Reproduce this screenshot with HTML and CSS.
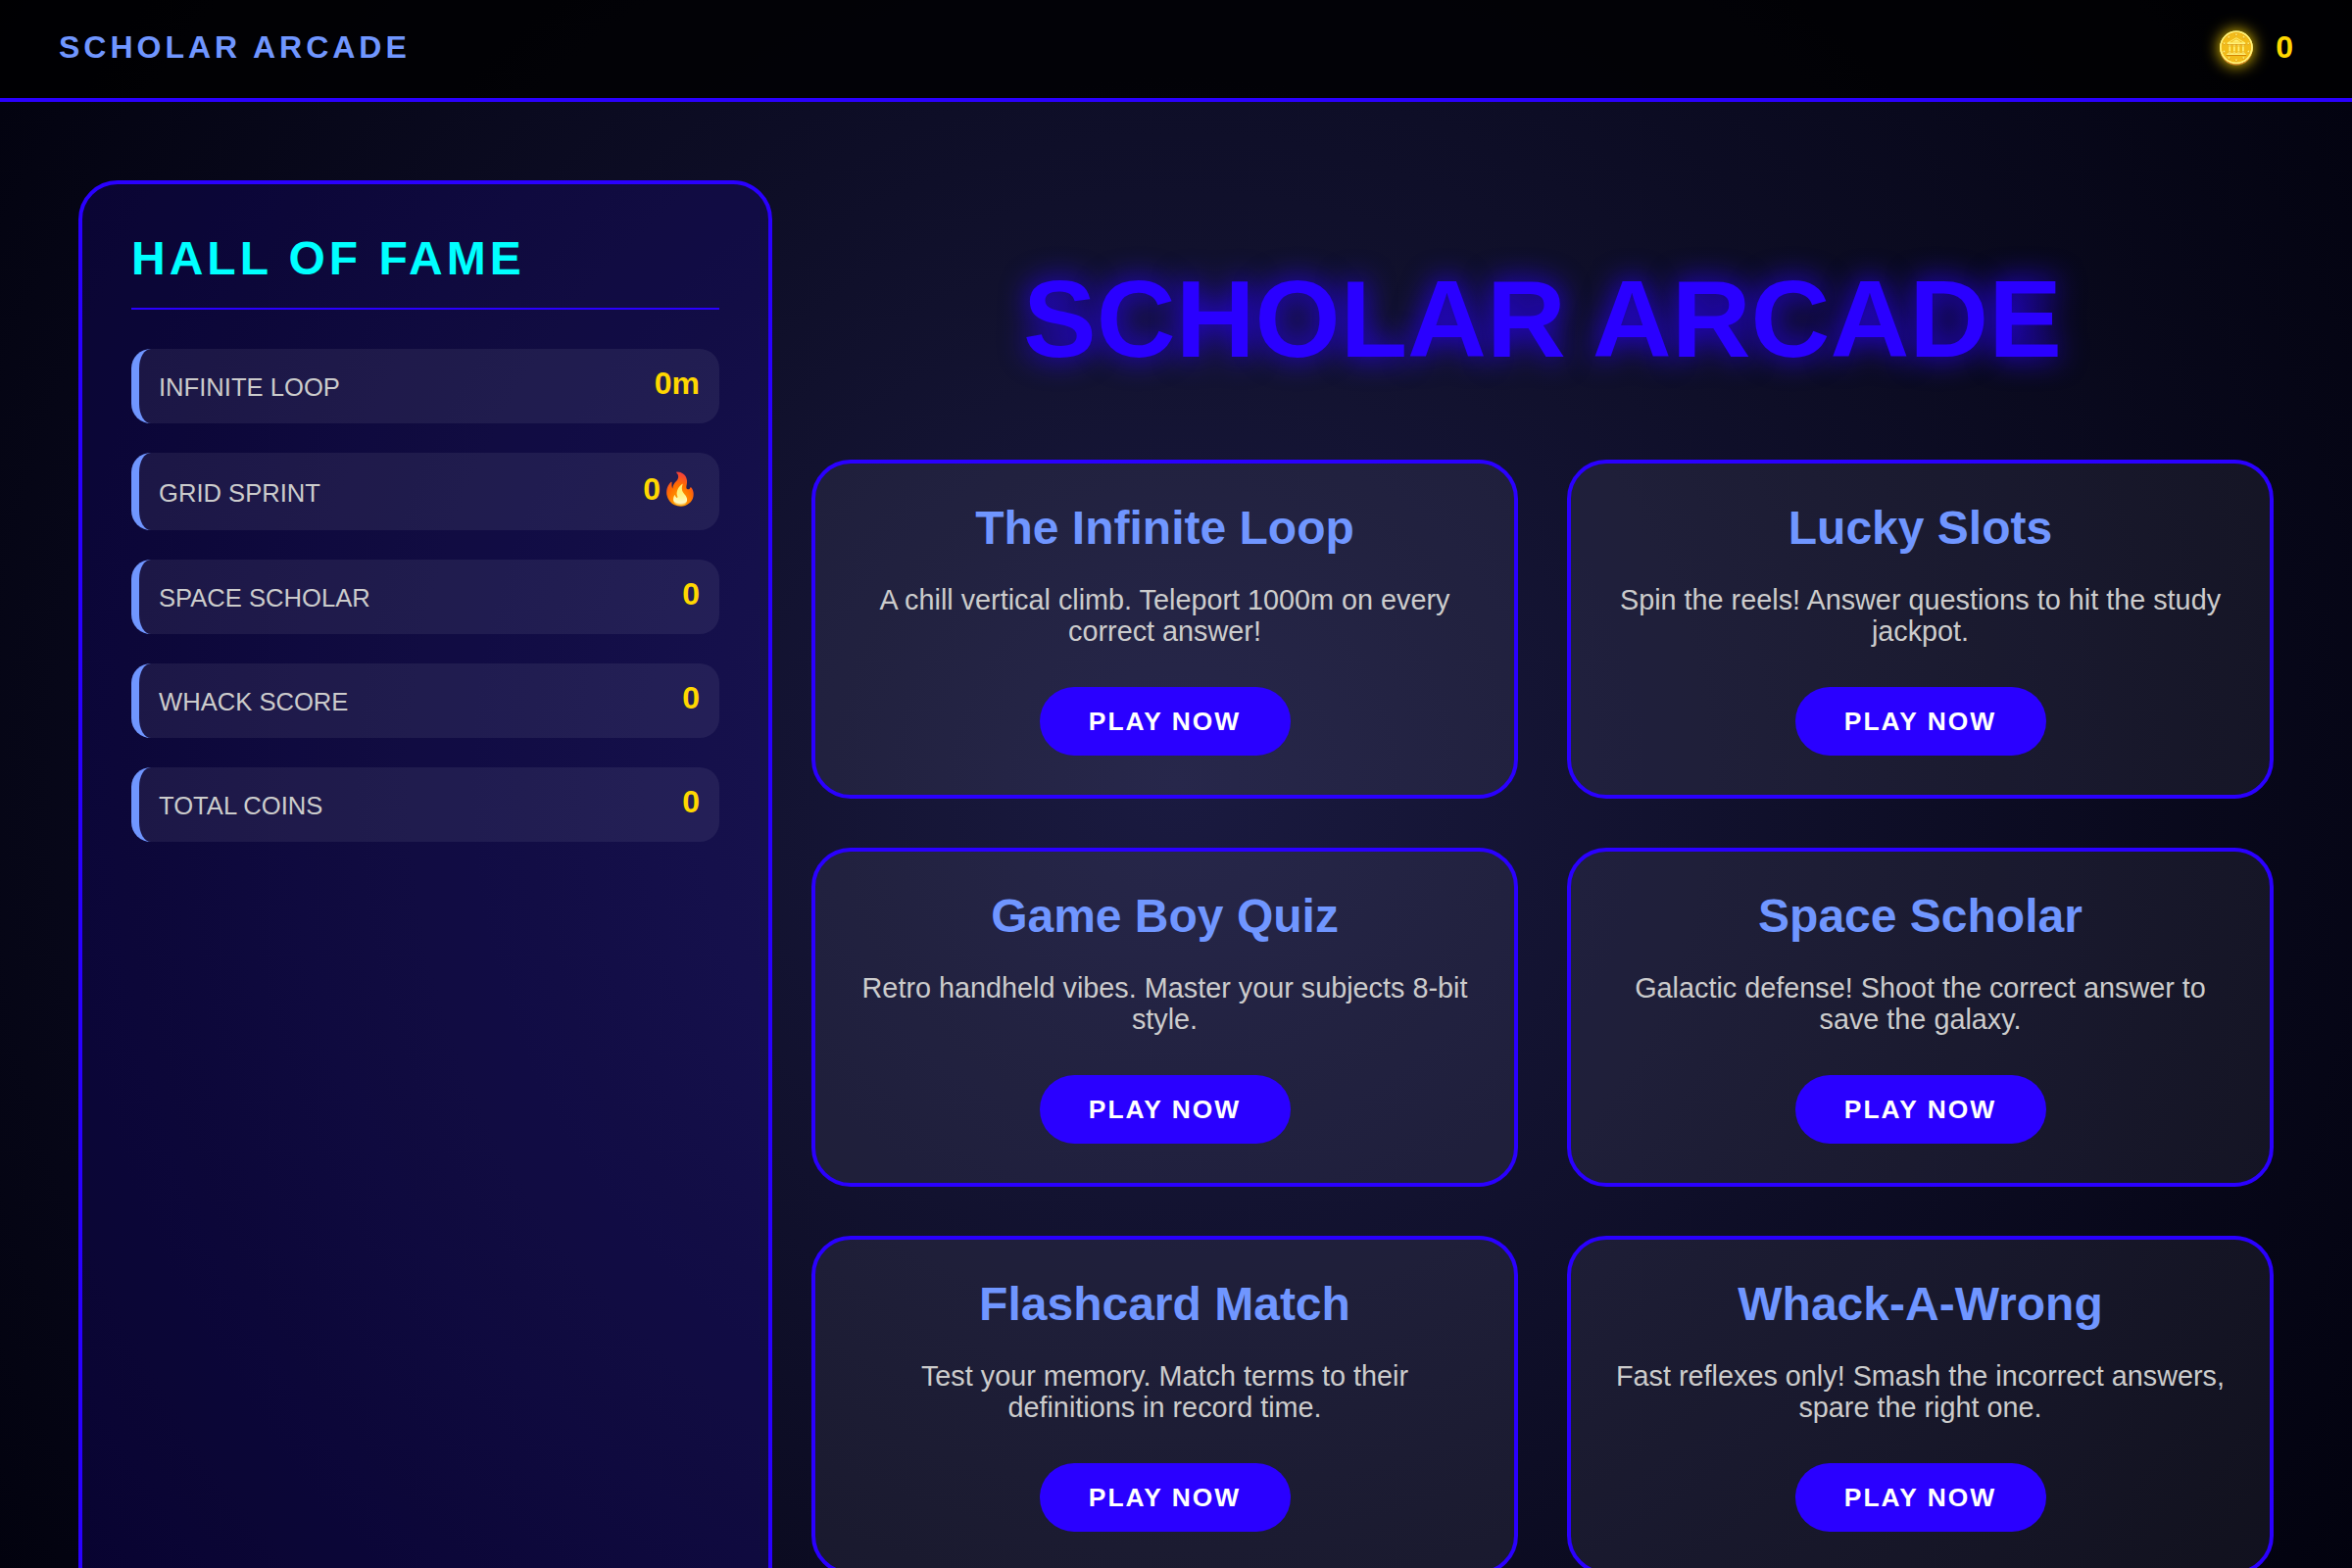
FILE: index.html
```html
<!DOCTYPE html>
<html lang="en">
<head>
    <meta charset="UTF-8">
    <meta name="viewport" content="width=device-width, initial-scale=1.0">
    <title>Scholar Arcade</title>
    <link rel="stylesheet" href="styles.css">
</head>

<body>
    <header class="topbar">
        <div class="brand">SCHOLAR ARCADE</div>
        <div class="wallet">
            <span class="coin-icon">🪙</span>
            <span class="coin-count">0</span>
        </div>
    </header>

    <div class="layout">
        <aside class="sidebar">
            <h2 class="sidebar-title">HALL OF FAME</h2>
            <div class="stat"><span class="stat-label">INFINITE LOOP</span><span class="stat-value">0m</span></div>
            <div class="stat stat-streak"><span class="stat-label">GRID SPRINT</span><span class="stat-value">0🔥</span></div>
            <div class="stat"><span class="stat-label">SPACE SCHOLAR</span><span class="stat-value">0</span></div>
            <div class="stat"><span class="stat-label">WHACK SCORE</span><span class="stat-value">0</span></div>
            <div class="stat"><span class="stat-label">TOTAL COINS</span><span class="stat-value">0</span></div>
        </aside>

        <main class="main">
            <h1 class="main-title">SCHOLAR ARCADE</h1>
            <div class="game-grid">
                <div class="game-card">
                    <h3>The Infinite Loop</h3>
                    <p>A chill vertical climb. Teleport 1000m on every correct answer!</p>
                    <button class="play-button">PLAY NOW</button>
                </div>
                <div class="game-card">
                    <h3>Lucky Slots</h3>
                    <p>Spin the reels! Answer questions to hit the study jackpot.</p>
                    <button class="play-button">PLAY NOW</button>
                </div>
                <div class="game-card">
                    <h3>Game Boy Quiz</h3>
                    <p>Retro handheld vibes. Master your subjects 8-bit style.</p>
                    <button class="play-button">PLAY NOW</button>
                </div>
                <div class="game-card">
                    <h3>Space Scholar</h3>
                    <p>Galactic defense! Shoot the correct answer to save the galaxy.</p>
                    <button class="play-button">PLAY NOW</button>
                </div>
                <div class="game-card">
                    <h3>Flashcard Match</h3>
                    <p>Test your memory. Match terms to their definitions in record time.</p>
                    <button class="play-button">PLAY NOW</button>
                </div>
                <div class="game-card">
                    <h3>Whack-A-Wrong</h3>
                    <p>Fast reflexes only! Smash the incorrect answers, spare the right one.</p>
                    <button class="play-button">PLAY NOW</button>
                </div>
            </div>
        </main>
    </div>
</body>
</html>
```

FILE: styles.css
```css
* {
    box-sizing: border-box;
}

html, body {
    height: 100%;
    overflow: hidden;
}

body {
    margin: 0;
    font-family: 'Liberation Sans', Arial, sans-serif;
    color: #ffffff;
    background: radial-gradient(circle at center, #1a1a40 0%, #02020e 100%);
}

.topbar {
    display: flex;
    justify-content: space-between;
    align-items: flex-start;
    height: 104px;
    padding: 30px 60px 0 60px;
    background: rgba(0, 0, 0, 0.8);
    border-bottom: 4px solid #2a00ff;
}

.brand {
    font-size: 32px;
    font-weight: bold;
    letter-spacing: 4px;
    color: #7096ff;
}

.wallet {
    display: flex;
    align-items: flex-start;
    gap: 20px;
}

.coin-icon {
    font-size: 32px;
    filter: drop-shadow(0 0 8px #ffd700);
}

.coin-count {
    font-size: 32px;
    font-weight: bold;
    color: #ffd700;
}

.layout {
    display: flex;
    align-items: flex-start;
    gap: 40px;
    padding: 80px 80px 0 80px;
}

.sidebar {
    width: 708px;
    height: 1500px;
    flex-shrink: 0;
    padding: 48px 50px;
    background: rgba(40, 8, 235, 0.15);
    border: 4px solid #2a00ff;
    border-radius: 40px;
}

.sidebar-title {
    margin: 0 0 40px 0;
    padding-bottom: 23px;
    font-size: 48px;
    font-weight: bold;
    letter-spacing: 4px;
    color: #00ffff;
    border-bottom: 2px solid #2a00ff;
}

.stat {
    display: flex;
    justify-content: space-between;
    align-items: flex-end;
    margin-bottom: 30px;
    padding: 17px 20px 22px 20px;
    background-color: rgba(255, 255, 255, 0.065);
    border-left: 8px solid #7096ff;
    border-radius: 20px;
}

.stat-streak {
    padding-top: 18px;
    padding-bottom: 22.5px;
}

.stat-label {
    font-size: 25.6px;
    color: #cccccc;
}

.stat-value {
    font-size: 32px;
    font-weight: bold;
    color: #ffd700;
}

.main {
    flex: 1;
}

.main-title {
    margin: 79px 0 81px 0;
    font-size: 112px;
    font-weight: bold;
    line-height: 125px;
    text-align: center;
    color: #2a00ff;
    text-shadow: 0 0 30px #2a00ff;
}

.game-grid {
    display: grid;
    grid-template-columns: 1fr 1fr;
    gap: 50px;
}

.game-card {
    padding: 38px 40px 40px 40px;
    text-align: center;
    background-color: rgba(255, 255, 255, 0.06);
    border: 4px solid #2a00ff;
    border-radius: 40px;
}

.game-card h3 {
    margin: 0 0 30px 0;
    font-size: 48px;
    font-weight: bold;
    color: #7096ff;
}

.game-card p {
    margin: 0 0 41px 0;
    font-size: 28.8px;
    line-height: 32px;
    color: #cccccc;
}

.play-button {
    width: 256px;
    height: 70px;
    font-family: inherit;
    font-size: 26.4px;
    font-weight: bold;
    letter-spacing: 2px;
    color: #ffffff;
    background-color: #2a00ff;
    border: none;
    border-radius: 35px;
}
```
